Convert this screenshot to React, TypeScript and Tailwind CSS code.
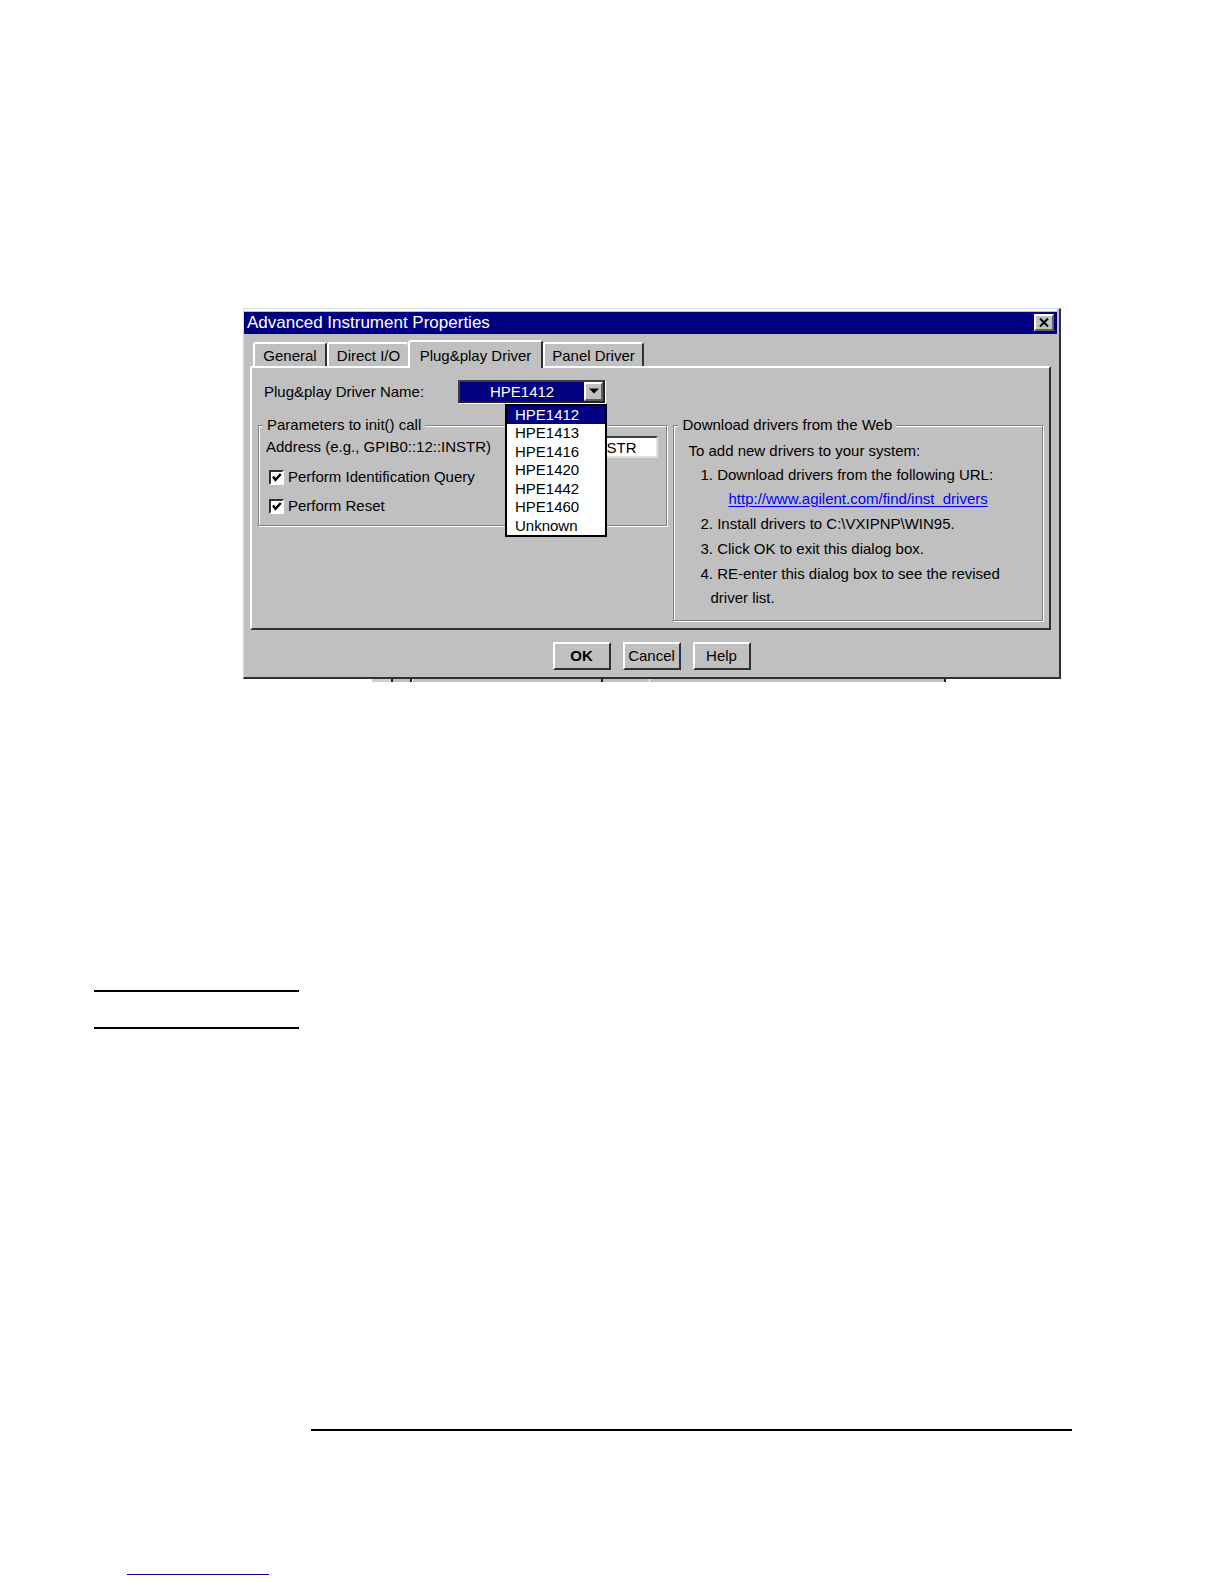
import { useState } from "react";
import type { ReactNode } from "react";

const drivers = ["HPE1412", "HPE1413", "HPE1416", "HPE1420", "HPE1442", "HPE1460", "Unknown"];

const tabs = [
  { name: "General", look: "h-6 w-[74px] border-r-2" },
  { name: "Direct I/O", look: "h-6 w-[81px]" },
  { name: "Plug&play Driver", look: "relative -mb-0.5 h-7 w-[135px] border-r-2" },
  { name: "Panel Driver", look: "h-6 w-[101px] border-l-0 border-r-2" },
];

function Checkbox({ label }: { label: string }) {
  return (
    <label className="flex h-5 items-center gap-1 pl-[3px]">
      <span className="grid">
        <input
          type="checkbox"
          defaultChecked
          className="peer col-start-1 row-start-1 size-[15px] appearance-none border-2 border-t-[#303030] border-r-white border-b-white border-l-[#303030] bg-white"
        />
        <svg
          viewBox="0 0 15 15"
          className="pointer-events-none invisible col-start-1 row-start-1 size-[15px] peer-checked:visible"
          fill="none"
          stroke="#000"
          strokeWidth="2.4"
        >
          <path d="M4 6.5 L6.5 9.8 L11.8 4" />
        </svg>
      </span>
      {label}
    </label>
  );
}

function Group({ title, children }: { title: string; children: ReactNode }) {
  return (
    <fieldset className="min-w-0 border border-[#808080] shadow-[1px_1px_0_#fff,inset_1px_1px_0_#fff]">
      <legend className="ml-1 bg-[#c0c0c0] px-1 leading-[22px]">{title}</legend>
      {children}
    </fieldset>
  );
}

function DriverSelect({ value, onChange }: { value: string; onChange: (v: string) => void }) {
  return (
    <div className="relative w-[147px]">
      <div className="flex h-[23px] border-2 border-t-[#404040] border-r-[#202020] border-b-[#202020] border-l-[#404040] bg-[#000080] shadow-[1px_1px_0_#fff]">
        <select
          id="driver"
          value={value}
          onChange={(e) => onChange(e.target.value)}
          className="min-w-0 flex-1 appearance-none bg-[#000080] pl-[30px] leading-[19px] text-white outline-none"
        >
          {drivers.map((d) => (
            <option key={d}>{d}</option>
          ))}
        </select>
        <span className="pointer-events-none flex w-[19px] items-center justify-center border-2 border-t-white border-r-[#606060] border-b-[#606060] border-l-white bg-[#c0c0c0]">
          <svg viewBox="0 0 10 6" className="h-1.5 w-2.5">
            <path d="M0 0.5H10L5 5.5Z" fill="#000" />
          </svg>
        </span>
      </div>
      <ul
        role="listbox"
        aria-label="Driver names"
        className="absolute top-6 -right-0.5 z-10 w-[102px] border-2 border-black bg-white leading-[18px]"
      >
        {drivers.map((d) => (
          <li
            key={d}
            role="option"
            aria-selected={d === value}
            onClick={() => onChange(d)}
            className="pl-2 even:mb-px aria-selected:bg-[#000080] aria-selected:text-white"
          >
            {d}
          </li>
        ))}
      </ul>
    </div>
  );
}

export default function App() {
  const [driver, setDriver] = useState("HPE1412");
  return (
    <main className="bg-white pt-[308px] font-['Liberation_Sans',sans-serif] text-[15px] leading-5 text-black">
      <section
        role="dialog"
        aria-label="Advanced Instrument Properties"
        className="mr-[163px] ml-[243px] border-t border-r-2 border-b-2 border-l border-t-[#d8d8d8] border-r-[#303030] border-b-[#303030] border-l-[#d8d8d8] bg-[#c0c0c0] pb-[7px]"
      >
        <header className="mr-0.5 border-t-2 border-white">
          <div className="mt-px flex h-[22px] items-start justify-between bg-[#000080] pr-[3px] pl-[3px]">
            <h1 className="text-[17px] leading-[22px] text-white">Advanced Instrument Properties</h1>
            <button
              type="button"
              aria-label="Close"
              className="mt-0.5 flex h-[17px] w-5 items-center justify-center border-2 border-t-white border-r-[#606060] border-b-[#606060] border-l-white bg-[#c0c0c0]"
            >
              <svg viewBox="0 0 10 9" className="h-[9px] w-2.5" stroke="#000" strokeWidth="2">
                <path d="M1 0.5L9 8.5M9 0.5L1 8.5" />
              </svg>
            </button>
          </div>
        </header>

        <div role="tablist" className="flex h-8 items-end pl-[9px]">
          {tabs.map((t) => (
            <button
              key={t.name}
              type="button"
              role="tab"
              aria-selected={t.name === "Plug&play Driver"}
              className={
                "rounded-t-[3px] border-t-2 border-l-2 border-t-white border-r-[#303030] border-l-white bg-[#c0c0c0] pt-0.5 text-center whitespace-nowrap " +
                t.look
              }
            >
              {t.name}
            </button>
          ))}
        </div>

        <div
          role="tabpanel"
          className="mr-2 ml-1.5 border-2 border-t-white border-r-[#303030] border-b-[#303030] border-l-white pt-3 pr-1.5 pb-[7px] pl-1.5"
        >
          <div className="flex h-[22px] items-center pl-1.5">
            <label htmlFor="driver" className="w-[194px] pt-px">
              Plug&amp;play Driver Name:
            </label>
            <DriverSelect value={driver} onChange={setDriver} />
          </div>

          <div className="mt-3 grid grid-cols-[410fr_370fr] items-start gap-1.5">
            <Group title="Parameters to init() call">
              <div className="flex flex-col gap-[9px] pr-2 pb-[9px] pl-[7px]">
                <div className="flex h-[22px] items-center justify-between">
                  <label htmlFor="address">Address (e.g., GPIB0::12::INSTR)</label>
                  <input
                    id="address"
                    defaultValue="INSTR"
                    className="h-[22px] w-24 border-2 border-t-[#404040] border-r-[#e0e0e0] border-b-[#e0e0e0] border-l-[#404040] bg-white pr-5 text-right outline-none"
                  />
                </div>
                <Checkbox label="Perform Identification Query" />
                <Checkbox label="Perform Reset" />
              </div>
            </Group>

            <Group title="Download drivers from the Web">
              <div className="pt-[3px] pr-2 pb-2.5 pl-3.5 leading-6">
                <p>To add new drivers to your system:</p>
                <ol className="flex flex-col gap-px pl-3">
                  <li>
                    1. Download drivers from the following URL:
                    <a
                      href="http://www.agilent.com/find/inst_drivers"
                      className="ml-7 block w-fit text-[#0000ff] underline underline-offset-2"
                    >
                      http://www.agilent.com/find/inst_drivers
                    </a>
                  </li>
                  <li>2. Install drivers to C:\VXIPNP\WIN95.</li>
                  <li>3. Click OK to exit this dialog box.</li>
                  <li>
                    4. RE-enter this dialog box to see the revised
                    <span className="ml-2.5 block">driver list.</span>
                  </li>
                </ol>
              </div>
            </Group>
          </div>
        </div>

        <div className="mt-3 flex justify-center gap-3">
          {["OK", "Cancel", "Help"].map((b) => (
            <button
              key={b}
              type="button"
              className="h-7 w-[58px] border-2 border-t-white border-r-[#303030] border-b-[#303030] border-l-white bg-[#c0c0c0] first:font-bold"
            >
              {b}
            </button>
          ))}
        </div>
      </section>

      <div className="mr-[278px] ml-[372px] flex h-[3px]">
        <div className="w-[19px] bg-[#d0d0d0]" />
        <div className="w-[21px] border-x-2 border-[#202020] bg-[#c0c0c0]" />
        <div className="flex flex-1 border-r-2 border-l border-r-[#202020] border-l-white bg-[#c0c0c0]">
          <div className="h-full w-[190px] border-r-2 border-[#202020]" />
          <div className="h-full w-[47px] border-r border-white" />
        </div>
      </div>

      <div className="mt-[308px] ml-[94px] h-[39px] w-[205px] border-y-2 border-black" />
      <hr className="mt-[400px] mr-[152px] ml-[311px] border-t-2 border-black" />
      <div className="pt-[143px] pb-2">
        <hr className="ml-[127px] w-[142px] border-[#000080]" />
      </div>
    </main>
  );
}
